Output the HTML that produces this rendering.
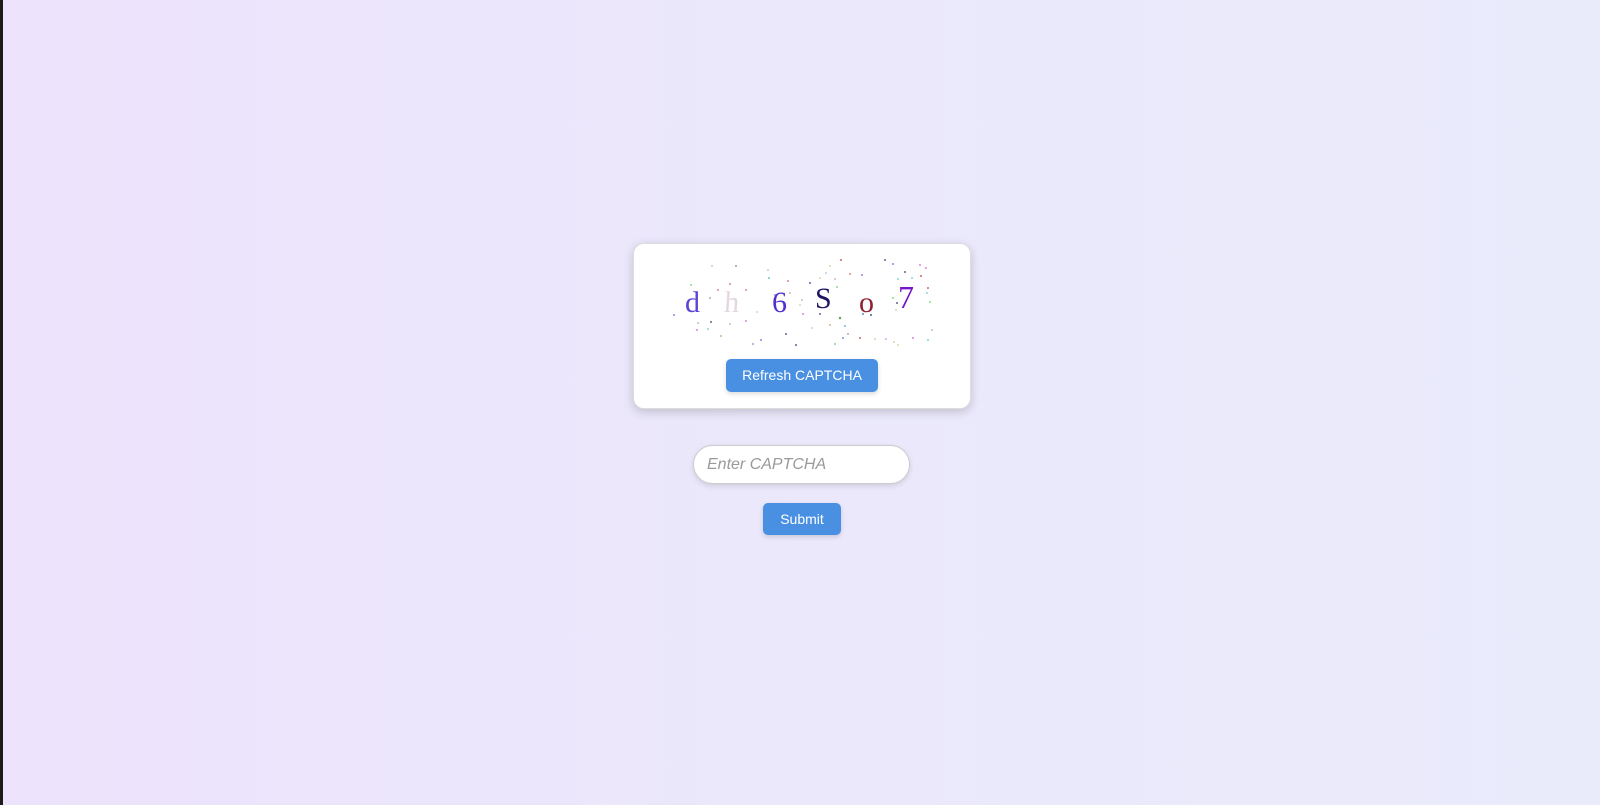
<!DOCTYPE html>
<html><head><meta charset="utf-8"><style>
html,body{margin:0;padding:0;width:1600px;height:805px;overflow:hidden}
body{background:linear-gradient(90deg,#ede3fc 0%,#ebe8fb 50%,#e9ebfb 100%);font-family:"Liberation Sans",Arial,sans-serif;position:relative}
.strip{position:absolute;left:0;top:0;width:3px;height:805px;background:#1e1b1b}
.card{position:absolute;left:633px;top:243px;width:338px;height:166px;background:#fff;border-radius:11px;box-shadow:0 3px 10px rgba(0,0,0,.18);border:1px solid #ddd;box-sizing:border-box}
.btn{position:absolute;background:#4a90e2;color:#fff;border-radius:5px;font-size:14px;text-align:center;box-shadow:0 2px 5px rgba(0,0,0,.15)}
.input{position:absolute;left:693px;top:445px;width:217px;height:39px;box-sizing:border-box;border:1px solid #ccc;border-radius:20px;background:#fff;box-shadow:0 2px 6px rgba(0,0,0,.12);font-style:italic;color:#999;font-size:16px;line-height:37px;padding-left:13px}
svg{position:absolute;left:660px;top:250px}
</style></head><body>
<div class="strip"></div>
<div class="card"></div>
<svg width="280" height="105" viewBox="0 0 280 105">
<g font-family="'Liberation Serif',serif" font-size="30">
<text x="25" y="62" fill="#5a45d8">d</text>
<text x="68" y="62" fill="#e6d6e2" transform="skewX(-4)">h</text>
<text x="112" y="62" fill="#5430d0">6</text>
<text x="155" y="58" fill="#1e1466">S</text>
<text x="199" y="62" fill="#8e2335">o</text>
<text x="238" y="58" fill="#7516c8" font-size="32">7</text>
</g>
<g>
<circle cx="52" cy="16" r=".9" fill="#9c9"/><circle cx="76" cy="16" r=".9" fill="#a6a"/><circle cx="31" cy="35" r=".9" fill="#6c6"/><circle cx="70" cy="34" r=".9" fill="#c66"/><circle cx="58" cy="40" r=".9" fill="#c66"/><circle cx="86" cy="40" r=".9" fill="#c66"/><circle cx="50" cy="48" r=".9" fill="#999"/><circle cx="14" cy="65" r=".9" fill="#66c"/><circle cx="38" cy="73" r=".9" fill="#c9c"/><circle cx="51" cy="72" r=".9" fill="#336"/><circle cx="48" cy="79" r=".9" fill="#6cc"/><circle cx="37" cy="80" r=".9" fill="#c6c"/><circle cx="61" cy="86" r=".9" fill="#c96"/><circle cx="70" cy="74" r=".9" fill="#c9c"/><circle cx="86" cy="71" r=".9" fill="#c6c"/><circle cx="97" cy="62" r=".9" fill="#cc9"/><circle cx="101" cy="90" r=".9" fill="#66c"/><circle cx="93" cy="94" r=".9" fill="#69c"/><circle cx="108" cy="20" r=".9" fill="#9c9"/><circle cx="109" cy="28" r="1" fill="#6cc"/><circle cx="128" cy="31" r=".9" fill="#c66"/><circle cx="150" cy="33" r=".9" fill="#339"/><circle cx="170" cy="16" r=".9" fill="#cc9"/><circle cx="181" cy="10" r=".9" fill="#c33"/><circle cx="190" cy="24" r=".9" fill="#c66"/><circle cx="175" cy="29" r=".9" fill="#c9c"/><circle cx="177" cy="37" r=".9" fill="#6c6"/><circle cx="202" cy="25" r=".9" fill="#66c"/><circle cx="166" cy="23" r=".9" fill="#9cc"/><circle cx="140" cy="55" r=".9" fill="#cc9"/><circle cx="143" cy="64" r=".9" fill="#c6c"/><circle cx="160" cy="64" r=".9" fill="#339"/><circle cx="180" cy="68" r="1.2" fill="#696"/><circle cx="185" cy="76" r=".9" fill="#69c"/><circle cx="170" cy="75" r=".9" fill="#c96"/><circle cx="152" cy="78" r=".9" fill="#cc9"/><circle cx="183" cy="88" r=".9" fill="#66c"/><circle cx="175" cy="94" r=".9" fill="#6c6"/><circle cx="188" cy="84" r=".9" fill="#c6c"/><circle cx="200" cy="88" r=".9" fill="#c33"/><circle cx="211" cy="65" r="1" fill="#369"/><circle cx="126" cy="84" r=".9" fill="#336"/><circle cx="136" cy="95" r=".9" fill="#336"/><circle cx="160" cy="28" r=".9" fill="#cc9"/><circle cx="225" cy="10" r=".9" fill="#336"/><circle cx="233" cy="14" r=".9" fill="#66c"/><circle cx="245" cy="22" r=".9" fill="#336"/><circle cx="260" cy="15" r=".9" fill="#c6c"/><circle cx="266" cy="18" r=".9" fill="#c6c"/><circle cx="252" cy="28" r=".9" fill="#6cc"/><circle cx="238" cy="29" r=".9" fill="#6cc"/><circle cx="261" cy="26" r=".9" fill="#c33"/><circle cx="233" cy="48" r=".9" fill="#6c6"/><circle cx="237" cy="53" r=".9" fill="#336"/><circle cx="268" cy="38" r=".9" fill="#c33"/><circle cx="267" cy="43" r=".9" fill="#6cc"/><circle cx="270" cy="52" r=".9" fill="#6c6"/><circle cx="236" cy="60" r=".9" fill="#cc9"/><circle cx="226" cy="89" r=".9" fill="#c9c"/><circle cx="234" cy="92" r=".9" fill="#cc9"/><circle cx="238" cy="95" r=".9" fill="#cc9"/><circle cx="253" cy="88" r=".9" fill="#c6c"/><circle cx="268" cy="90" r=".9" fill="#6cc"/><circle cx="272" cy="80" r=".9" fill="#c9c"/><circle cx="215" cy="89" r=".9" fill="#cc9"/><circle cx="130" cy="43" r=".9" fill="#c9c"/><circle cx="115" cy="45" r=".9" fill="#66c"/><circle cx="142" cy="50" r=".9" fill="#c9c"/><circle cx="203" cy="64" r=".9" fill="#369"/>
</g>
</svg>
<div class="btn" style="left:726px;top:359px;width:152px;height:33px;line-height:33px">Refresh CAPTCHA</div>
<div class="input">Enter CAPTCHA</div>
<div class="btn" style="left:763px;top:503px;width:78px;height:32px;line-height:32px">Submit</div>
</body></html>
